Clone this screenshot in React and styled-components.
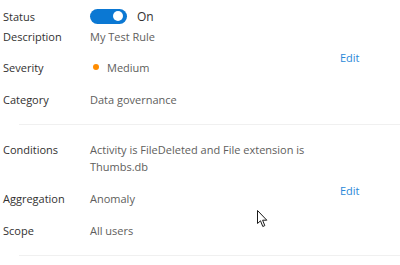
import styled, { createGlobalStyle } from "styled-components";

const GlobalStyle = createGlobalStyle`
  html, body {
    margin: 0;
    padding: 0;
    background: #ffffff;
  }
  body {
    font-family: "Open Sans", "Noto Sans", sans-serif;
  }
`;

const Page = styled.div`
  position: relative;
  width: 400px;
  height: 265px;
  overflow: hidden;
  background: #ffffff;
`;

const Section = styled.section`
  display: flex;
  align-items: center;
  padding: ${(p) => p.$padding};
`;

const Divider = styled.div`
  height: 1px;
  margin-left: 19px;
  background: #f0f0f0;
`;

const Rows = styled.div`
  flex: 1;
  display: flex;
  flex-direction: column;
`;

const Row = styled.div`
  display: grid;
  grid-template-columns: 90px 228px;
  align-items: ${(p) => (p.$top ? "start" : "center")};
  min-height: 20px;
  margin-top: ${(p) => p.$gap ?? 12}px;
  font-size: 11px;
  line-height: 17px;
`;

const Label = styled.div`
  padding-left: 3px;
  color: #323130;
`;

const Value = styled.div`
  color: #605e5c;
  display: flex;
  align-items: center;
`;

const Toggle = styled.span`
  position: relative;
  display: inline-block;
  width: 37px;
  height: 15px;
  border-radius: 8px;
  background: #0b78d3;
  margin-right: 10px;

  &::after {
    content: "";
    position: absolute;
    right: 4px;
    top: 2.5px;
    width: 10px;
    height: 10px;
    border-radius: 50%;
    background: #ffffff;
  }
`;

const ToggleText = styled.span`
  color: #323130;
  font-size: 12px;
`;

const Dot = styled.span`
  width: 6px;
  height: 6px;
  border-radius: 50%;
  background: #ff8c00;
  margin: 0 8px 0 3px;
`;

const EditLink = styled.a`
  width: 60px;
  font-size: 11px;
  color: #2b88d8;
  text-decoration: none;
  cursor: pointer;
`;

const Cursor = styled.svg`
  position: absolute;
  left: 257px;
  top: 210px;
`;

export default function App() {
  return (
    <Page>
      <GlobalStyle />
      <Section $padding="6px 0 15px">
        <Rows>
          <Row $gap={0}>
            <Label>Status</Label>
            <Value>
              <Toggle />
              <ToggleText>On</ToggleText>
            </Value>
          </Row>
          <Row $gap={0}>
            <Label>Description</Label>
            <Value>My Test Rule</Value>
          </Row>
          <Row $gap={11}>
            <Label>Severity</Label>
            <Value>
              <Dot />
              Medium
            </Value>
          </Row>
          <Row>
            <Label>Category</Label>
            <Value>Data governance</Value>
          </Row>
        </Rows>
        <EditLink>Edit</EditLink>
      </Section>
      <Divider />
      <Section $padding="16px 0 15px">
        <Rows>
          <Row $gap={0} $top>
            <Label>Conditions</Label>
            <Value>Activity is FileDeleted and File extension is Thumbs.db</Value>
          </Row>
          <Row $gap={13}>
            <Label>Aggregation</Label>
            <Value>Anomaly</Value>
          </Row>
          <Row>
            <Label>Scope</Label>
            <Value>All users</Value>
          </Row>
        </Rows>
        <EditLink>Edit</EditLink>
      </Section>
      <Divider />
      <Cursor width="12" height="18" viewBox="0 0 12 18">
        <path
          d="M0.5 0.5 L0.5 13.5 L3.5 10.8 L5.8 16.5 L7.8 15.6 L5.6 10.2 L9.8 10.2 Z"
          fill="#ffffff"
          stroke="#1a1a1a"
          strokeWidth="1"
          strokeLinejoin="miter"
        />
      </Cursor>
    </Page>
  );
}
